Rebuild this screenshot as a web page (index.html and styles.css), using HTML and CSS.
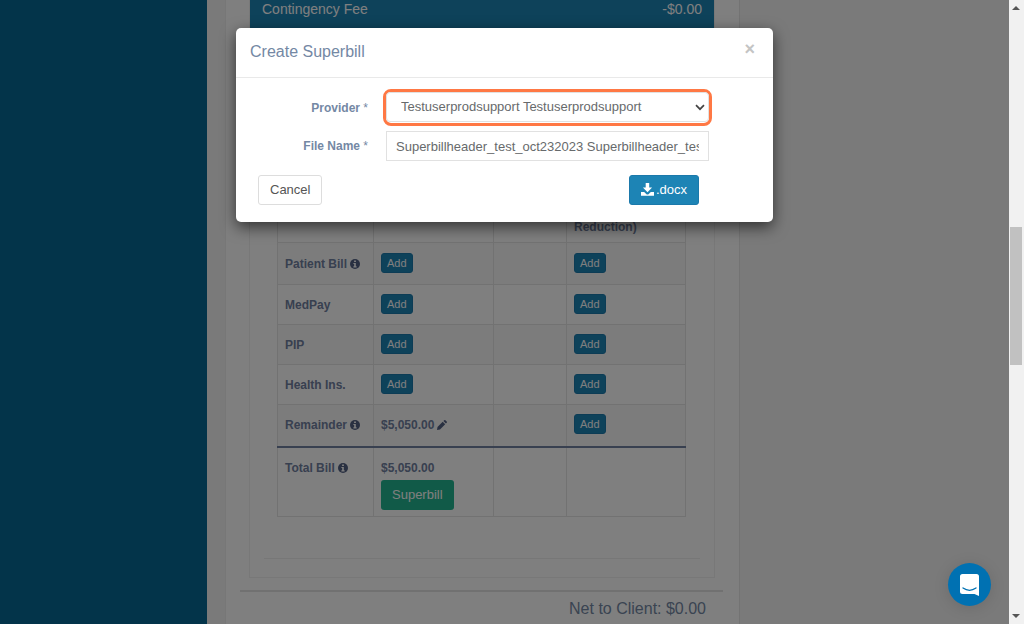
FILE: index.html
```html
<!DOCTYPE html>
<html lang="en">
<head>
<meta charset="utf-8">
<title>Create Superbill</title>
<link rel="stylesheet" href="styles.css">
</head>
<body>
<svg class="defs" aria-hidden="true">
  <symbol id="info" viewBox="0 0 10 10"><circle cx="5" cy="5" r="5" fill="currentColor"/><path d="M4.1 1.4h1.8v1.5H4.1zM3.4 3.9h2.4v3.4h.8v1.1H3.4V7.3h.8V5h-.8z" fill="#fff"/></symbol>
  <symbol id="pencil" viewBox="0 0 10 10"><path d="M0 10l.5-3L5.7 1.800l2.500 2.500L3 9.500zM6.400 1.100L7.200.3q.6-.5 1.200 0l1.300 1.300q.5.600 0 1.200l-.8.8z" fill="currentColor"/></symbol>
  <symbol id="download" viewBox="0 0 13 13"><path d="M4.700 0h3.500v4.600h2.900L6.500 9.200 1.900 4.600h2.800zM0 9h3.200l2 2q1.300 1 2.600 0l2-2H13v3.800H0z" fill="currentColor"/></symbol>
</svg>
<div class="screen">
  <div class="app">
    <nav class="sidebar" aria-label="Main"></nav>
    <main class="content">
      <section class="sheet">
        <div class="panel">
          <div class="banner"><span>Contingency Fee</span><span>-$0.00</span></div>
          <div class="panel-body">
            <table class="bills">
              <colgroup><col class="c1"><col class="c2"><col class="c3"><col class="c4"></colgroup>
              <thead><tr><th></th><th></th><th></th><th>Reduction)</th></tr></thead>
              <tbody>
                <tr><th scope="row">Patient Bill <svg class="ico"><use href="#info"/></svg></th><td><button class="add">Add</button></td><td></td><td><button class="add">Add</button></td></tr>
                <tr class="short"><th scope="row">MedPay</th><td><button class="add">Add</button></td><td></td><td><button class="add">Add</button></td></tr>
                <tr class="short"><th scope="row">PIP</th><td><button class="add">Add</button></td><td></td><td><button class="add">Add</button></td></tr>
                <tr class="short"><th scope="row">Health Ins.</th><td><button class="add">Add</button></td><td></td><td><button class="add">Add</button></td></tr>
                <tr><th scope="row">Remainder <svg class="ico"><use href="#info"/></svg></th><td>$5,050.00 <svg class="ico pen"><use href="#pencil"/></svg></td><td></td><td><button class="add">Add</button></td></tr>
                <tr class="total"><th scope="row">Total Bill <svg class="ico"><use href="#info"/></svg></th><td>$5,050.00<button class="superbill">Superbill</button></td><td></td><td></td></tr>
              </tbody>
            </table>
            <hr class="thin">
          </div>
        </div>
        <div class="net">Net to Client: $0.00</div>
      </section>
    </main>
  </div>
  <div class="backdrop">
    <form class="modal" role="dialog" aria-labelledby="title">
      <header class="modal-head"><h1 id="title">Create Superbill</h1><button type="button" class="close" aria-label="Close">×</button></header>
      <div class="modal-body">
        <div class="field"><label for="provider">Provider <span class="req">*</span></label>
          <div class="highlight"><select id="provider"><option>Testuserprodsupport Testuserprodsupport</option></select>
          <svg class="chev" viewBox="0 0 10 7"><path d="M1 1.200l4 4 4-4" fill="none" stroke="currentColor" stroke-width="1.700"/></svg></div></div>
        <div class="field"><label for="file">File Name <span class="req">*</span></label>
          <input id="file" type="text" value="Superbillheader_test_oct232023 Superbillheader_test_oct232023"></div>
        <div class="actions"><button type="button" class="cancel">Cancel</button>
          <button type="button" class="docx"><svg class="dl"><use href="#download"/></svg>.docx</button></div>
      </div>
    </form>
  </div>
  <button class="chat" aria-label="Open chat"><svg viewBox="0 0 20 22"><path d="M2.500 0h14Q19 0 19 2.500V22l-4.500-2h-12Q0 20 0 17.500v-15Q0 0 2.500 0z" fill="#fff"/><path d="M3 14q6.500 4.600 13 0" fill="none" stroke="#0071b2" stroke-width="1.300" stroke-linecap="round"/></svg></button>
</div>
<div class="scrollbar" aria-hidden="true"><span class="arrow up"></span><span class="thumb"></span><span class="arrow down"></span></div>
</body>
</html>
```
FILE: styles.css
```css
* { box-sizing: border-box; }
body { margin: 0; height: 100vh; display: flex; overflow: hidden; font: 12px/16px "Liberation Sans", Arial, sans-serif; color: #7488a4; }
button, input, select { font: inherit; font-weight: normal; margin: 0; }
.defs { position: absolute; width: 0; height: 0; }
.screen { position: relative; flex: 1; min-width: 0; overflow: hidden; }
.app { display: flex; height: 100%; }
.sidebar { flex: 0 0 207px; background: #076894; }
.content { flex: 1; min-width: 0; padding: 0 269px 0 18px; background: #f4f4f5; }
.sheet { min-height: 100%; padding: 0 16px 0 14px; background: #fff; border-left: 1px solid #eee; border-right: 1px solid #e7e7e7; }
.panel { margin: 0 8px 0 9px; border: 1px solid #f1f1f1; border-top: 0; }
.banner { display: flex; justify-content: space-between; height: 40px; padding: 0 12px; background: #1d84b5; color: #fff; font-size: 14px; line-height: 18px; }
.panel-body { padding: 150px 14px 18px; }
.bills { width: calc(100% - 27px); margin-left: 13px; table-layout: fixed; border-collapse: collapse; color: #7080a0; font-weight: bold; }
.bills th, .bills td { height: 42px; padding: 0 7px; border: 1px solid #e5e5e5; text-align: left; vertical-align: middle; white-space: nowrap; }
.bills .short th, .bills .short td { height: 40px; }
.bills thead th { height: 52px; padding-bottom: 7px; vertical-align: bottom; }
.c1 { width: 96px; } .c2 { width: 120px; } .c3 { width: 73px; }
.bills tbody tr:nth-child(odd) { background: #f9f9f9; }
.bills .total, .bills tbody .total { background: #fff; }
.bills .total th, .bills .total td { height: 70px; padding-top: 12px; vertical-align: top; border-top: 2px solid #7080a0; }
.ico { width: 10px; height: 10px; vertical-align: -1px; color: #526083; }
.pen { margin-left: -1px; }
.add { display: block; height: 20px; margin-bottom: 2px; padding: 0 5px; border: 1px solid #1b79ab; border-radius: 3px; background: #1d84b5; color: #fff; font-size: 11px; line-height: 18px; }
.superbill { display: block; height: 30px; margin-top: 4px; padding: 0 11px; border: 0; border-radius: 3px; background: #23b491; color: #fff; font-size: 13px; }
.thin { height: 1px; margin: 41px 0 0; border: 0; background: #eee; }
.net { margin-top: 12px; padding: 7px 17px 0 0; border-top: 2px solid #e2e2e2; text-align: right; font-size: 16px; line-height: 20px; }
.backdrop { position: absolute; inset: 0; padding: 28px 16px; background: rgba(0,0,0,.5); }
.modal { max-width: 537px; margin: 0 auto; background: #fff; border-radius: 5px; box-shadow: 0 5px 15px rgba(0,0,0,.6); }
.modal-head { display: flex; justify-content: space-between; height: 50px; padding: 14px 18px 0 14px; border-bottom: 1px solid #e9e9e9; }
h1 { margin: 0; font-size: 16px; line-height: 20px; font-weight: normal; }
.close { height: 14px; padding: 0; border: 0; background: none; color: #c4c4c4; font-size: 18px; line-height: 14px; font-weight: bold; }
.modal-body { padding: 11px 61px 17px 22px; }
.field { display: flex; align-items: center; gap: 15px; }
.field + .field { margin-top: 5px; }
.field label { flex: 0 0 110px; text-align: right; font-weight: bold; }
.req { font-weight: normal; }
.highlight { position: relative; flex: 1; border: 3px solid #ff7844; border-radius: 8px; padding: 0 0 1px; }
.highlight select { display: block; width: 100%; height: 30px; padding: 0 14px; border: 1px solid #e1e1e1; border-radius: 4px; background: #fff; color: #676a6c; font-size: 13px; appearance: none; }
.chev { position: absolute; right: 4px; top: 12px; width: 10px; height: 7px; color: #444; }
.field input { flex: 1; min-width: 0; height: 30px; margin: 0 3px; padding: 0 9px; border: 1px solid #e1e1e1; color: #676a6c; font-size: 13px; }
.actions { display: flex; justify-content: space-between; margin: 14px 13px 0 0; }
.actions button { height: 30px; border-radius: 3px; font-size: 13px; }
.cancel { padding: 0 11px; border: 1px solid #ddd; background: #fff; color: #555; }
.docx { display: flex; align-items: center; gap: 2px; padding: 0 11px; border: 1px solid #1b79ab; background: #1d84b5; color: #fff; }
.dl { width: 13px; height: 13px; margin-bottom: 2px; }
.chat { position: absolute; right: 18px; bottom: 18px; width: 43px; height: 43px; padding: 0; display: grid; place-items: center; border: 0; border-radius: 50%; background: #0071b2; box-shadow: 0 2px 16px rgba(0,0,0,.12); }
.chat svg { width: 20px; height: 22px; }
.scrollbar { flex: 0 0 15px; display: flex; flex-direction: column; align-items: center; padding: 6px 2px 6px 1px; background: #f1f1f1; }
.thumb { width: 100%; height: 138px; margin: 217px 0 auto; background: #c1c1c1; }
.arrow { border: 4px solid transparent; border-top-width: 0; border-bottom: 4px solid #555; }
.down { border-bottom-width: 0; border-top: 4px solid #555; }
```
